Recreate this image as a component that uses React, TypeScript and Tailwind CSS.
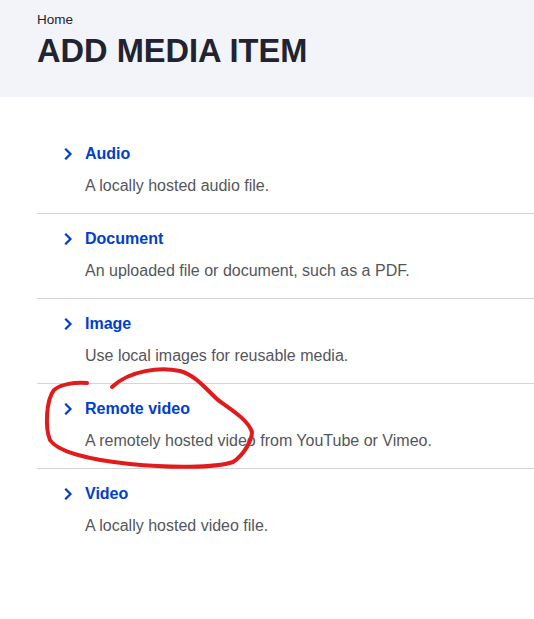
import React from 'react';

const items = [
  { title: 'Audio', desc: 'A locally hosted audio file.' },
  { title: 'Document', desc: 'An uploaded file or document, such as a PDF.' },
  { title: 'Image', desc: 'Use local images for reusable media.' },
  { title: 'Remote video', desc: 'A remotely hosted video from YouTube or Vimeo.' },
  { title: 'Video', desc: 'A locally hosted video file.' },
];

const Chevron = () => (
  <svg width="9" height="12" viewBox="0 0 9 12" className="shrink-0">
    <path d="M2 1.5 L6.5 6 L2 10.5" fill="none" stroke="#003ecc" strokeWidth="2.2" strokeLinecap="square" />
  </svg>
);

export default function App() {
  return (
    <div className="relative min-h-[619px] w-[534px] bg-white font-['Liberation_Sans',Arial,sans-serif]">
      {/* Page header */}
      <div className="h-[97px] bg-[#f3f4f9] pl-[37px] pt-[12px]">
        <div className="text-[13.5px] leading-[16px] text-[#222330]">Home</div>
        <h1 className="mt-[3px] text-[32.6px] font-bold leading-[40px] text-[#222330]">ADD MEDIA ITEM</h1>
      </div>

      {/* Media type list */}
      <ul className="ml-[37px] mt-[32px]">
        {items.map((item, i) => (
          <li
            key={item.title}
            className={`pb-[15px] pl-[27px] pt-[15px] ${i < items.length - 1 ? 'border-b border-[#d3d4d9]' : ''}`}
          >
            <div className="flex h-[20px] items-center gap-[12px]">
              <Chevron />
              <span className="text-[16px] font-bold leading-[20px] text-[#003ecc]">{item.title}</span>
            </div>
            <p className="mt-[10px] pl-[21px] text-[16px] leading-[24px] text-[#55565b]">{item.desc}</p>
          </li>
        ))}
      </ul>

      {/* Hand-drawn annotation */}
      <svg className="pointer-events-none absolute left-0 top-0" width="534" height="619" viewBox="0 0 534 619">
        <path
          d="M87 383 C75 382 61 384 54 390 C46 400 45 428 50 440 C58 452 90 460 130 464 C170 468 215 468 233 462 C244 455 252 440 252 432 C248 420 232 410 218 400 C205 388 195 375 180 371 C160 367 130 370 112 387"
          fill="none"
          stroke="#e11b1b"
          strokeWidth="4"
          strokeLinecap="round"
          strokeLinejoin="round"
        />
      </svg>
    </div>
  );
}
